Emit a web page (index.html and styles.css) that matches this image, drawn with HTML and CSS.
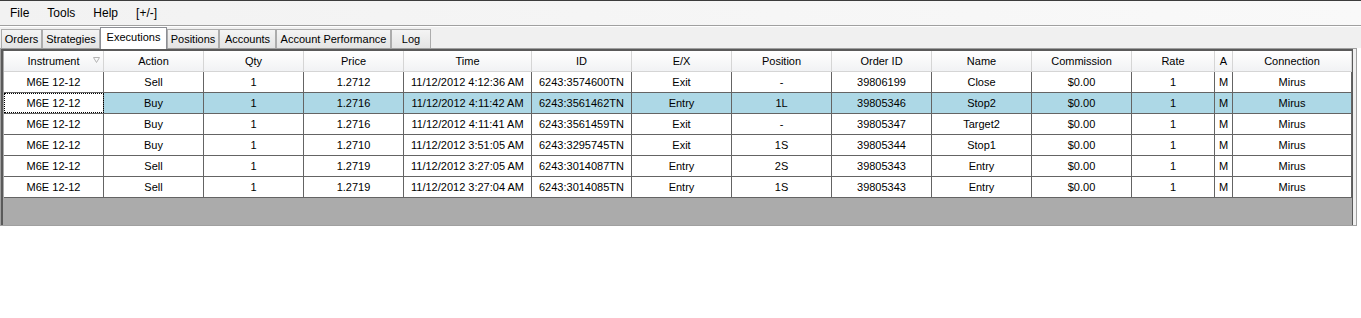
FILE: index.html
```html
<!DOCTYPE html>
<html lang="en">
<head>
    <meta charset="UTF-8">
    <title>Executions</title>
    <link rel="stylesheet" href="styles.css">
</head>
<body>
    <div class="menubar">
        <span class="menu-item">File</span>
        <span class="menu-item">Tools</span>
        <span class="menu-item">Help</span>
        <span class="menu-item">[+/-]</span>
    </div>

    <div class="tabstrip">
        <div class="tab">Orders</div>
        <div class="tab">Strategies</div>
        <div class="tab active">Executions</div>
        <div class="tab">Positions</div>
        <div class="tab">Accounts</div>
        <div class="tab">Account Performance</div>
        <div class="tab">Log</div>
    </div>

    <div class="panel">
        <div class="grid">
            <div class="row head">
                <div class="cell">Instrument
                    <svg class="sort" width="7" height="6" viewBox="0 0 7 6"><path d="M0.5 0.5 H6.5 L3.5 5.5 Z" fill="none" stroke="#b4b4b4" stroke-width="1"/></svg>
                </div>
                <div class="cell">Action</div>
                <div class="cell">Qty</div>
                <div class="cell">Price</div>
                <div class="cell">Time</div>
                <div class="cell">ID</div>
                <div class="cell">E/X</div>
                <div class="cell">Position</div>
                <div class="cell">Order ID</div>
                <div class="cell">Name</div>
                <div class="cell">Commission</div>
                <div class="cell">Rate</div>
                <div class="cell">A</div>
                <div class="cell">Connection</div>
            </div>

            <div class="row">
                <div class="cell">M6E 12-12</div><div class="cell">Sell</div><div class="cell">1</div><div class="cell">1.2712</div>
                <div class="cell">11/12/2012 4:12:36 AM</div><div class="cell">6243:3574600TN</div><div class="cell">Exit</div><div class="cell">-</div>
                <div class="cell">39806199</div><div class="cell">Close</div><div class="cell">$0.00</div><div class="cell">1</div><div class="cell">M</div><div class="cell">Mirus</div>
            </div>
            <div class="row selected">
                <div class="cell focus">M6E 12-12</div><div class="cell">Buy</div><div class="cell">1</div><div class="cell">1.2716</div>
                <div class="cell">11/12/2012 4:11:42 AM</div><div class="cell">6243:3561462TN</div><div class="cell">Entry</div><div class="cell">1L</div>
                <div class="cell">39805346</div><div class="cell">Stop2</div><div class="cell">$0.00</div><div class="cell">1</div><div class="cell">M</div><div class="cell">Mirus</div>
            </div>
            <div class="row">
                <div class="cell">M6E 12-12</div><div class="cell">Buy</div><div class="cell">1</div><div class="cell">1.2716</div>
                <div class="cell">11/12/2012 4:11:41 AM</div><div class="cell">6243:3561459TN</div><div class="cell">Exit</div><div class="cell">-</div>
                <div class="cell">39805347</div><div class="cell">Target2</div><div class="cell">$0.00</div><div class="cell">1</div><div class="cell">M</div><div class="cell">Mirus</div>
            </div>
            <div class="row">
                <div class="cell">M6E 12-12</div><div class="cell">Buy</div><div class="cell">1</div><div class="cell">1.2710</div>
                <div class="cell">11/12/2012 3:51:05 AM</div><div class="cell">6243:3295745TN</div><div class="cell">Exit</div><div class="cell">1S</div>
                <div class="cell">39805344</div><div class="cell">Stop1</div><div class="cell">$0.00</div><div class="cell">1</div><div class="cell">M</div><div class="cell">Mirus</div>
            </div>
            <div class="row">
                <div class="cell">M6E 12-12</div><div class="cell">Sell</div><div class="cell">1</div><div class="cell">1.2719</div>
                <div class="cell">11/12/2012 3:27:05 AM</div><div class="cell">6243:3014087TN</div><div class="cell">Entry</div><div class="cell">2S</div>
                <div class="cell">39805343</div><div class="cell">Entry</div><div class="cell">$0.00</div><div class="cell">1</div><div class="cell">M</div><div class="cell">Mirus</div>
            </div>
            <div class="row">
                <div class="cell">M6E 12-12</div><div class="cell">Sell</div><div class="cell">1</div><div class="cell">1.2719</div>
                <div class="cell">11/12/2012 3:27:04 AM</div><div class="cell">6243:3014085TN</div><div class="cell">Entry</div><div class="cell">1S</div>
                <div class="cell">39805343</div><div class="cell">Entry</div><div class="cell">$0.00</div><div class="cell">1</div><div class="cell">M</div><div class="cell">Mirus</div>
            </div>
        </div>
    </div>
</body>
</html>
```

FILE: styles.css
```css
* {
    box-sizing: border-box;
}
body {
    margin: 0;
    font-family: "Liberation Sans", Arial, sans-serif;
    font-size: 11px;
    color: #000;
    background: #fff;
}

/* menu */
.menubar {
    display: flex;
    align-items: center;
    height: 26px;
    padding-left: 1px;
    border-top: 1px solid #3c3c3c;
    border-bottom: 1px solid #a0a0a0;
    background: linear-gradient(to right, #f2f2f2, #f9f9f9);
    font-size: 12px;
}
.menu-item {
    padding: 0 9px;
}

/* tabs */
.tabstrip {
    display: flex;
    align-items: flex-end;
    height: 22px;
    padding-left: 1px;
    border-top: 1px solid #fff;
    background: #f0f0f0;
}
.tab {
    height: 19px;
    line-height: 19px;
    text-align: center;
    white-space: nowrap;
    border: 1px solid #acacac;
    border-bottom: none;
    background: linear-gradient(#f4f4f4, #e4e4e4);
}
.tab:nth-child(1) { width: 41px; }
.tab:nth-child(2) { width: 58px; }
.tab:nth-child(3) { width: 67px; }
.tab:nth-child(4) { width: 52px; }
.tab:nth-child(5) { width: 57px; }
.tab:nth-child(6) { width: 115px; }
.tab:nth-child(7) { width: 40px; }
.tab.active {
    position: relative;
    height: 22px;
    margin-bottom: -1px;
    line-height: 18px;
    background: #fff;
    border-color: #8c8e94;
}

/* grid panel */
.panel {
    width: 1357px;
    height: 178px;
    padding-right: 3px;
    border: 1px solid #a0a0a0;
    background: #f0f0f0;
}
.grid {
    height: 176px;
    padding-left: 1px;
    border-top: 2px solid #5a5a5a;
    border-left: 2px solid #5a5a5a;
    border-right: 1px solid #5a5a5a;
    background: #ababab;
}
.row {
    display: grid;
    grid-template-columns: 100px 100px 100px 100px 128px 100px 100px 100px 100px 100px 100px 83px 18px 119px;
    height: 21px;
    border-bottom: 1px solid #646464;
    background: #fff;
}
.cell {
    line-height: 20px;
    text-align: center;
    white-space: nowrap;
    overflow: hidden;
    border-right: 1px solid #646464;
}
.row.head {
    background: linear-gradient(#ffffff, #f1f2f4);
    border-bottom: 1px solid #d5d5d5;
}
.row.head .cell {
    position: relative;
    border-right-color: #d5d5d5;
}
.sort {
    position: absolute;
    right: 3px;
    top: 6px;
}
.row.selected {
    background: #add8e6;
}
.cell.focus {
    background: #fff;
    outline: 1px dotted #000;
    outline-offset: -1px;
}
```
